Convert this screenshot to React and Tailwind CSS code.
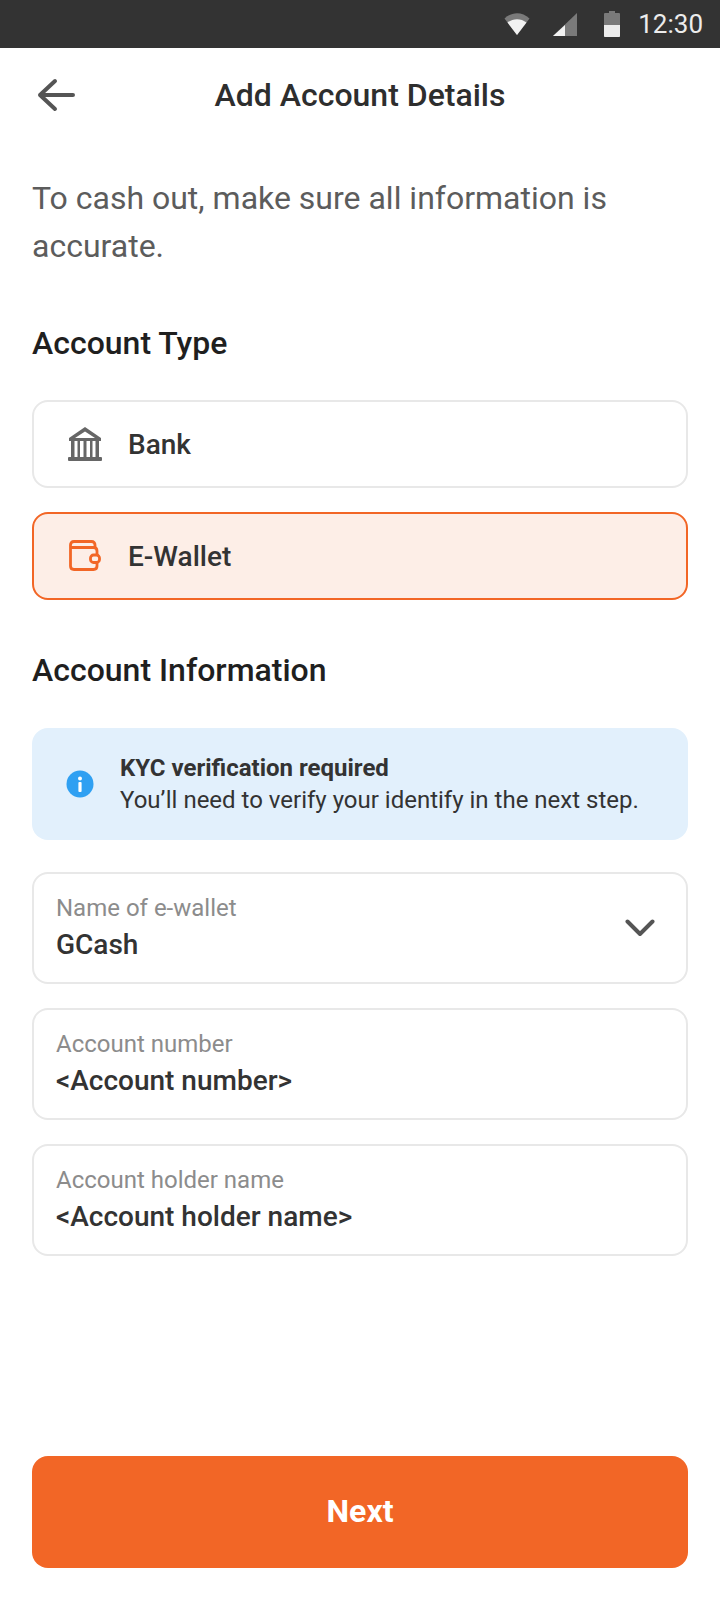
import React from 'react'

function StatusBar() {
  return (
    <div className="h-12 bg-[#333333] flex items-center justify-end pr-[17px] shrink-0">
      <svg width="28" height="24" viewBox="0 0 28 24" className="mr-[22px]">
        <path d="M1.5 6.5C9 -0.5 19 -0.5 26.5 6.5L14 23Z" fill="#7a7a7a" />
        <path d="M4.5 10.5C10 6 18 6 23.5 10.5L14 23Z" fill="#f2f2f2" />
      </svg>
      <svg width="24" height="24" viewBox="0 0 24 24" className="mr-[27px]">
        <path d="M24 1V24H0Z" fill="#7a7a7a" />
        <path d="M12 13V24H0Z" fill="#f2f2f2" />
      </svg>
      <svg width="16" height="26" viewBox="0 0 16 26" className="mr-[18px]">
        <path d="M5 0H11V2H15Q16 2 16 3V25Q16 26 15 26H1Q0 26 0 25V3Q0 2 1 2H5Z" fill="#7a7a7a" />
        <path d="M0 14H16V25Q16 26 15 26H1Q0 26 0 25Z" fill="#ececec" />
      </svg>
      <span className="text-[26px] leading-none text-[#ececec] font-['Roboto',sans-serif]">12:30</span>
    </div>
  )
}

function TypeOption({ icon, label, selected }) {
  return (
    <div
      className={`h-[88px] rounded-[16px] border-2 flex items-center pl-[32px] ${
        selected ? 'bg-[#fdeee7] border-[#f26626]' : 'bg-white border-[#e8e8e8]'
      }`}
    >
      <div className="w-[38px] flex justify-center">{icon}</div>
      <span className="ml-[24px] pt-[2px] text-[28px] font-medium text-[#333333]">{label}</span>
    </div>
  )
}

function Field({ label, value, chevron }) {
  return (
    <div className="h-[112px] rounded-[16px] border-2 border-[#e8e8e8] bg-white flex items-center justify-between pl-[22px] pr-[31px]">
      <div className="flex flex-col">
        <span className="mb-[2px] text-[24px] leading-[32px] text-[#8c8c8c]">{label}</span>
        <span className="text-[28px] leading-[38px] font-medium text-[#333333]">{value}</span>
      </div>
      {chevron && (
        <svg width="30" height="18" viewBox="0 0 30 18" fill="none">
          <path d="M2.5 2.5L15 15L27.5 2.5" stroke="#555555" strokeWidth="4" strokeLinecap="round" strokeLinejoin="round" />
        </svg>
      )}
    </div>
  )
}

export default function App() {
  return (
    <div className="w-[720px] h-[1600px] bg-white flex flex-col font-['Roboto',sans-serif]">
      <StatusBar />

      <div className="h-[94px] relative flex items-center justify-center shrink-0">
        <svg width="38" height="34" viewBox="0 0 38 34" fill="none" className="absolute left-[37px] top-[30px]">
          <path d="M36 17H3M18 3L3 17L18 31" stroke="#555555" strokeWidth="4" strokeLinecap="round" strokeLinejoin="round" />
        </svg>
        <h1 className="text-[32px] font-medium text-[#2e2e2e]">Add Account Details</h1>
      </div>

      <div className="flex-1 flex flex-col px-[32px] pb-[32px]">
        <p className="mt-[32px] text-[32px] leading-[48px] text-[#5c5c5c]">
          To cash out, make sure all information is accurate.
        </p>

        <h2 className="mt-[54px] text-[32px] leading-[38px] font-medium text-[#1f1f1f]">Account Type</h2>

        <div className="mt-[38px] flex flex-col gap-[24px]">
          <TypeOption
            label="Bank"
            icon={
              <svg width="34" height="34" viewBox="0 0 34 34" fill="#666666">
                <path d="M17 0L33 11V14H1V11ZM17 4.5L7 11H27Z" fillRule="evenodd" />
                <path d="M3 14H6.5V30H3ZM9.5 14H12V30H9.5ZM15.5 14H18.5V30H15.5ZM22 14H24.5V30H22ZM27.5 14H31V30H27.5ZM1 30H33Q34 30 34 31V33Q34 34 33 34H1Q0 34 0 33V31Q0 30 1 30Z" />
              </svg>
            }
          />
          <TypeOption
            selected
            label="E-Wallet"
            icon={
              <svg width="32" height="32" viewBox="0 0 32 32" fill="none" stroke="#f26626" strokeWidth="2.8" strokeLinejoin="round">
                <path d="M26 8V5Q26 1.5 22.5 1.5H5Q1.5 1.5 1.5 5V26Q1.5 29.5 5 29.5H24.5Q28 29.5 28 26V23" />
                <path d="M1.5 7.5H24.5Q28 7.5 28 11V15" />
                <rect x="21.5" y="15" width="9" height="7.5" rx="3" />
              </svg>
            }
          />
        </div>

        <h2 className="mt-[51px] text-[32px] leading-[38px] font-medium text-[#1f1f1f]">Account Information</h2>

        <div className="mt-[39px] h-[112px] rounded-[16px] bg-[#e2f0fc] flex items-center pl-[34px]">
          <svg width="28" height="28" viewBox="0 0 28 28">
            <circle cx="14" cy="14" r="13.5" fill="#2fa0f2" />
            <circle cx="14" cy="8.5" r="2" fill="#fff" />
            <rect x="12.4" y="12" width="3.2" height="10" rx="1" fill="#fff" />
          </svg>
          <div className="ml-[26px] flex flex-col text-[24px] leading-[32px] text-[#333333]">
            <span className="font-bold">KYC verification required</span>
            <span>You’ll need to verify your identify in the next step.</span>
          </div>
        </div>

        <div className="mt-[32px] flex flex-col gap-[24px]">
          <Field label="Name of e-wallet" value="GCash" chevron />
          <Field label="Account number" value="<Account number>" />
          <Field label="Account holder name" value="<Account holder name>" />
        </div>

        <button className="mt-auto h-[112px] pb-[2px] rounded-[16px] bg-[#f26626] text-white text-[32px] font-bold">Next</button>
      </div>
    </div>
  )
}
